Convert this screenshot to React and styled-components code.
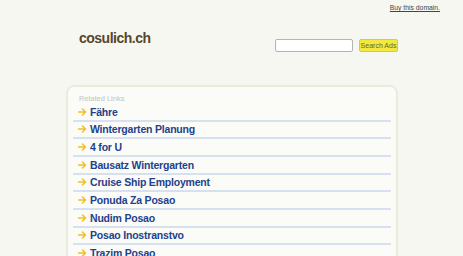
import React from 'react';
import styled, { createGlobalStyle } from 'styled-components';

const GlobalStyle = createGlobalStyle`
  html, body {
    margin: 0;
    padding: 0;
    background: #f7f7f1;
    font-family: 'Liberation Sans', Arial, sans-serif;
    overflow: hidden;
  }
`;

const TopBar = styled.div`
  display: flex;
  justify-content: flex-end;
  padding: 4px 23px 0 0;
  height: 14px;
`;

const BuyLink = styled.a`
  font-size: 6.8px;
  color: #444;
  text-decoration: underline;
  cursor: pointer;
`;

const Container = styled.div`
  width: 332px;
  margin-left: 66px;
`;

const Header = styled.div`
  display: flex;
  justify-content: space-between;
  align-items: flex-start;
  height: 67px;
`;

const Title = styled.h1`
  margin: 12px 0 0 13px;
  font-size: 14px;
  font-weight: 700;
  color: #56462a;
  letter-spacing: -0.5px;
`;

const SearchForm = styled.form`
  display: flex;
  gap: 6px;
  margin-top: 21px;
`;

const SearchInput = styled.input`
  width: 78px;
  height: 13px;
  box-sizing: border-box;
  border: 1px solid #b4b4b0;
  border-radius: 2px;
  background: #fff;
  padding: 0;
`;

const SearchButton = styled.button`
  width: 39px;
  height: 13px;
  box-sizing: border-box;
  border: 1px solid #c9c58a;
  border-radius: 2px;
  background: #f4e83c;
  color: #6a6340;
  font-family: 'Liberation Sans', Arial, sans-serif;
  font-size: 7px;
  padding: 0;
  line-height: 11px;
`;

const Panel = styled.div`
  border: 2px solid #ebebdc;
  border-radius: 8px;
  background: #fbfbf8;
  padding: 7px 5px 0 5px;
  height: 200px;
`;

const Label = styled.div`
  font-size: 7.5px;
  color: #c4c4c0;
  padding-left: 6px;
  height: 10px;
`;

const LinkList = styled.ul`
  list-style: none;
  margin: 0;
  padding: 0;
`;

const LinkRow = styled.li`
  display: flex;
  align-items: center;
  gap: 3px;
  height: 15.67px;
  padding-left: 5px;
  border-bottom: 2px solid #d6e0ef;
`;

const Arrow = styled.svg`
  width: 9px;
  height: 8px;
  flex: none;
`;

const LinkText = styled.a`
  font-size: 10.5px;
  font-weight: 700;
  letter-spacing: -0.2px;
  color: #23418c;
  text-decoration: none;
  cursor: pointer;
`;

const links = [
  'Fähre',
  'Wintergarten Planung',
  '4 for U',
  'Bausatz Wintergarten',
  'Cruise Ship Employment',
  'Ponuda Za Posao',
  'Nudim Posao',
  'Posao Inostranstvo',
  'Trazim Posao',
];

export default function App() {
  return (
    <>
      <GlobalStyle />
      <TopBar>
        <BuyLink>Buy this domain.</BuyLink>
      </TopBar>
      <Container>
        <Header>
          <Title>cosulich.ch</Title>
          <SearchForm onSubmit={(e) => e.preventDefault()}>
            <SearchInput type="text" />
            <SearchButton type="submit">Search Ads</SearchButton>
          </SearchForm>
        </Header>
        <Panel>
          <Label>Related Links</Label>
          <LinkList>
            {links.map((l) => (
              <LinkRow key={l}>
                <Arrow viewBox="0 0 9 8">
                  <path
                    d="M0.5 4 H7.5 M4.5 1 L7.5 4 L4.5 7"
                    fill="none"
                    stroke="#f2c12e"
                    strokeWidth="1.6"
                    strokeLinecap="round"
                    strokeLinejoin="round"
                  />
                </Arrow>
                <LinkText>{l}</LinkText>
              </LinkRow>
            ))}
          </LinkList>
        </Panel>
      </Container>
    </>
  );
}
